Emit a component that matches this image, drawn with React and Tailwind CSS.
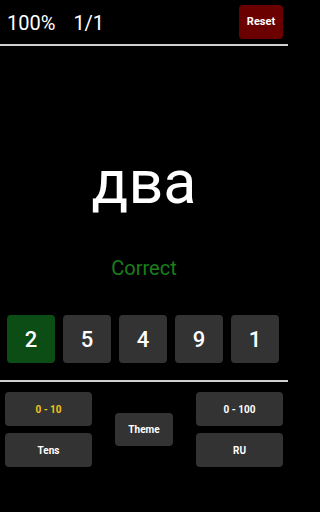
export default function App() {
  const nums = [2, 5, 4, 9, 1];
  return (
    <div className="min-h-screen w-full bg-black">
      <div
        className="w-[288px] h-[512px] bg-black text-white flex flex-col overflow-hidden"
        style={{ fontFamily: "Roboto, 'Noto Sans', sans-serif" }}
      >
        {/* Header */}
        <div className="h-[44px] flex items-center justify-between pl-[7px] pr-[5px]">
          <div className="flex gap-[18px] text-[20px] leading-none pt-[2px]">
            <span>100%</span>
            <span>1/1</span>
          </div>
          <button className="w-[44px] h-[34px] rounded-[4px] bg-[#6b0000] text-[11px] font-bold text-white">
            Reset
          </button>
        </div>
        <div className="h-[2px] bg-[#d0d0d0]" />

        {/* Word */}
        <div className="mt-[106px] text-center text-[61px] leading-none">два</div>
        <div className="mt-[45px] text-center text-[20px] leading-none text-[#1a7f1a]">
          Correct
        </div>

        {/* Choices */}
        <div className="mt-[37px] flex gap-[8px] pl-[7px]">
          {nums.map((n, i) => (
            <div
              key={n}
              className={`w-[48px] h-[48px] rounded-[4px] flex items-center justify-center text-[22px] font-medium ${
                i === 0 ? "bg-[#0b4d14]" : "bg-[#333333]"
              }`}
            >
              {n}
            </div>
          ))}
        </div>
        <div className="mt-[17px] h-[2px] bg-[#d0d0d0]" />

        {/* Controls */}
        <div className="mt-[10px] flex items-center gap-[23px] pl-[5px]">
          <div className="flex flex-col gap-[7px]">
            <button className="w-[87px] h-[34px] rounded-[4px] bg-[#333333] text-[10px] font-bold text-[#f5c518]">
              0 - 10
            </button>
            <button className="w-[87px] h-[34px] rounded-[4px] bg-[#333333] text-[10px] font-bold">
              Tens
            </button>
          </div>
          <button className="w-[58px] h-[33px] rounded-[4px] bg-[#333333] text-[10px] font-bold">
            Theme
          </button>
          <div className="flex flex-col gap-[7px]">
            <button className="w-[87px] h-[34px] rounded-[4px] bg-[#333333] text-[10px] font-bold">
              0 - 100
            </button>
            <button className="w-[87px] h-[34px] rounded-[4px] bg-[#333333] text-[10px] font-bold">
              RU
            </button>
          </div>
        </div>
      </div>
    </div>
  );
}
